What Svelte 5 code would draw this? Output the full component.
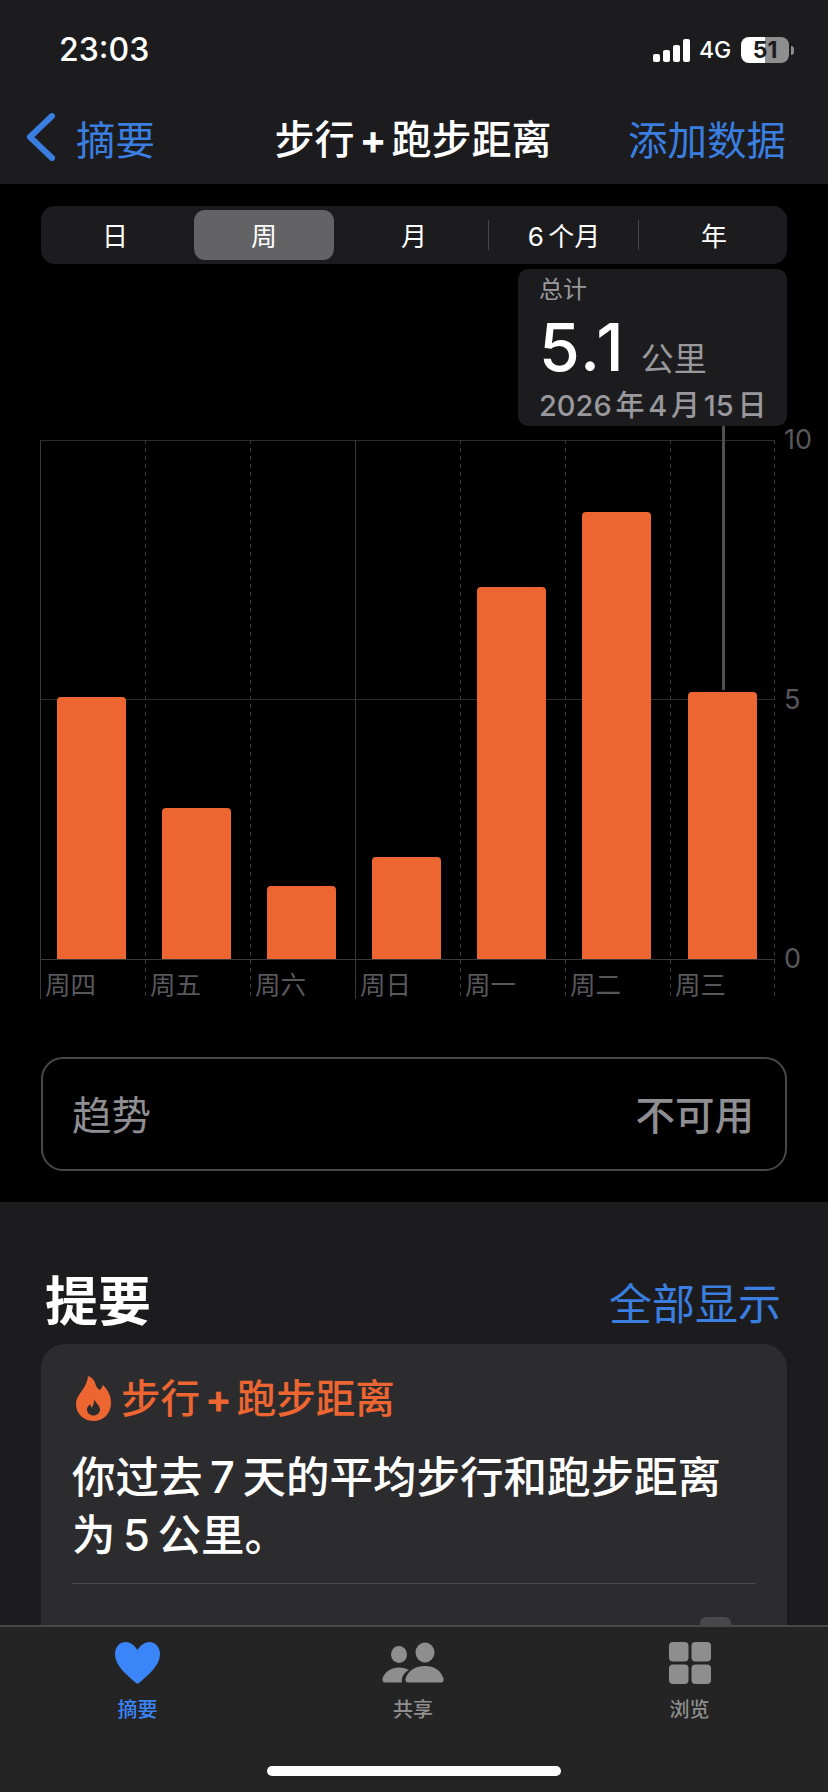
<script>
  const segments = ['日', '周', '月', '6 个月', '年'];
  const days = [
    { label: '周四', h: 262 },
    { label: '周五', h: 151 },
    { label: '周六', h: 73 },
    { label: '周日', h: 102, solid: true },
    { label: '周一', h: 372 },
    { label: '周二', h: 447 },
    { label: '周三', h: 267 }
  ];
</script>

<div class="page">
  <header class="top">
    <div class="status">
      <span class="time">23:03</span>
      <div class="status-right">
        <svg class="signal" viewBox="0 0 37 23" width="37" height="23" fill="#fff">
          <rect x="0" y="15" width="7" height="8" rx="2"/>
          <rect x="10" y="11" width="7" height="12" rx="2"/>
          <rect x="20" y="6" width="7" height="17" rx="2"/>
          <rect x="30" y="0" width="7" height="23" rx="2"/>
        </svg>
        <span class="net">4G</span>
        <div class="battery"><span>51</span></div>
        <i class="nub"></i>
      </div>
    </div>
    <nav class="nav">
      <div class="back">
        <svg viewBox="0 0 30 48" width="30" height="48" fill="none" stroke="#3a7ee0" stroke-width="6" stroke-linecap="round" stroke-linejoin="round">
          <path d="M26 3 L4 24 L26 45"/>
        </svg>
        <span>摘要</span>
      </div>
      <div class="title">步行<b>+</b>跑步距离</div>
      <div class="add">添加数据</div>
    </nav>
  </header>

  <main class="black">
    <div class="seg">
      {#each segments as s, i}
        <div class="seg-item" class:sel={i === 1} class:div={i === 2 || i === 3}><span>{s}</span></div>
      {/each}
    </div>

    <div class="chart">
      <div class="tip">
        <div class="tip-head">总计</div>
        <div class="tip-val"><strong>5.1</strong><span>公里</span></div>
        <div class="tip-date">2026 年 4 月 15 日</div>
        <i class="tip-line"></i>
      </div>
      <div class="plot">
        {#each days as d}
          <div class="col" class:solid={d.solid}>
            <div class="bar-wrap"><div class="bar" style="height:{d.h}px"></div></div>
            <div class="day">{d.label}</div>
          </div>
        {/each}
      </div>
      <div class="axis"><span>10</span><span>5</span><span>0</span></div>
    </div>

    <div class="trend">
      <span class="trend-l">趋势</span>
      <span class="trend-r">不可用</span>
    </div>
  </main>

  <section class="lower">
    <div class="lower-head">
      <h2>提要</h2>
      <span>全部显示</span>
    </div>
    <article class="card">
      <div class="card-title">
        <svg viewBox="0 0 35 45" width="35" height="45" fill="#ed6531" fill-rule="evenodd">
          <path d="M12 0 C22 4 17 10 24 14 C26 12 26 10 27 9 C33 15 35 21 35 27 C35 38 27 45 17.5 45 C8 45 0 38 0 28 C0 18 11 13 12 0 Z M18.5 23 C19 27 24 29 24 33.5 C24 37 21 39.5 17.5 39.5 C14 39.5 11 37 11 33.5 C11 31 12.5 29.5 14.5 28.5 C14.5 30 15 31.5 16 31.5 C17.5 29 18 26 18.5 23 Z"/>
        </svg>
        <span>步行<b>+</b>跑步距离</span>
      </div>
      <p class="card-text">你过去 7 天的平均步行和跑步距离<br/>为 5 公里。</p>
      <div class="rule"></div>
      <div class="peek"></div>
    </article>
  </section>

  <footer class="tabs">
    <div class="tab active">
      <svg viewBox="0 0 45 42" width="45" height="42" fill="#3a85f8">
        <path d="M22.5 8 C19.5 3 15 0 10.5 0 C4.5 0 0 5 0 12 C0 24 12 33 21 41 C22 42 23 42 24 41 C33 33 45 24 45 12 C45 5 40.5 0 34.5 0 C30 0 25.5 3 22.5 8 Z"/>
      </svg>
      <span>摘要</span>
    </div>
    <div class="tab">
      <svg viewBox="0 0 62 41" width="62" height="42" fill="#8e8e8e">
        <ellipse cx="17" cy="12" rx="8" ry="8.5"/>
        <ellipse cx="43" cy="10" rx="9.5" ry="10"/>
        <path d="M3 40 C1 40 0 38 0.5 36 C3 29 9 25 17 25 C21 25 24 26 27 27.5 C22 30 19 35 20 40 Z"/>
        <path d="M26 40 C24 40 23 38 23.5 36 C26 28 34 23.5 43 23.5 C52 23.5 59 28 61.5 36 C62 38 61 40 59 40 Z"/>
      </svg>
      <span>共享</span>
    </div>
    <div class="tab">
      <svg viewBox="0 0 42 42" width="42" height="42" fill="#8e8e8e">
        <rect x="0" y="0" width="19.5" height="19.5" rx="4"/>
        <rect x="22.5" y="0" width="19.5" height="19.5" rx="4"/>
        <rect x="0" y="22.5" width="19.5" height="19.5" rx="4"/>
        <rect x="22.5" y="22.5" width="19.5" height="19.5" rx="4"/>
      </svg>
      <span>浏览</span>
    </div>
    <div class="home"></div>
  </footer>
</div>

<style>
  :global(body) { margin: 0; background: #000; }
  .page {
    position: relative;
    width: 828px;
    height: 1792px;
    overflow: hidden;
    background: #000;
    color: #fff;
    font-family: "Inter", "Noto Sans CJK SC", sans-serif;
  }

  .top { height: 184px; background: #1c1c1e; }
  .status {
    height: 90px;
    padding: 10px 34px 0 59px;
    box-sizing: border-box;
    display: flex;
    align-items: center;
    justify-content: space-between;
  }
  .time { font-size: 32px; font-weight: 500; line-height: 80px; }
  .status-right { display: flex; align-items: center; }
  .signal { margin-right: 9px; }
  .net { font-size: 23px; font-weight: 500; margin-right: 11px; width: 31px; }
  .battery {
    width: 48px;
    height: 26px;
    border-radius: 8px;
    background: linear-gradient(90deg, #fff 50%, #8e8e8e 50%);
    display: flex;
    align-items: center;
    justify-content: center;
    color: #1c1c1e;
    font-size: 23px;
    font-weight: 700;
  }
  .nub { width: 3px; height: 9px; margin-left: 2px; background: #8e8e8e; border-radius: 0 3px 3px 0; }

  .nav {
    height: 94px;
    display: grid;
    grid-template-columns: 1fr auto 1fr;
    align-items: center;
    padding: 0 42px 4px 26px;
  }
  .back { display: flex; align-items: center; gap: 20px; color: #3a7ee0; font-size: 39.5px; }
  .title { font-size: 40px; font-weight: 500; white-space: nowrap; margin-right: -14px; }
  .title b, .card-title b { font-weight: 700; margin: 0 5px; }
  .add { text-align: right; color: #3a7ee0; font-size: 39.5px; }

  .black { height: 1018px; padding-top: 22px; box-sizing: border-box; }
  .seg {
    margin: 0 41px;
    height: 58px;
    background: #1c1c1e;
    border-radius: 14px;
    display: grid;
    grid-template-columns: 148px repeat(4, 150px);
    font-size: 26px;
    box-sizing: border-box;
  }
  .seg-item { position: relative; display: flex; align-items: center; justify-content: center; padding-bottom: 2px; }
  .seg-item span { word-spacing: -3px; }
  .seg-item.sel { margin: 4px 5px; background: #636366; border-radius: 11px; }
  .seg-item.div::after {
    content: "";
    position: absolute;
    right: 0;
    top: 14px;
    bottom: 14px;
    width: 1px;
    background: #48484a;
  }

  .chart { position: relative; display: flex; margin: 176px 0 0 40px; }
  .plot {
    display: flex;
    width: 735px;
    height: 559px;
    background:
      linear-gradient(#2c2c2e, #2c2c2e) 0 0 / 100% 1px no-repeat,
      linear-gradient(#2c2c2e, #2c2c2e) 0 259px / 100% 1px no-repeat,
      linear-gradient(#3a3a3c, #3a3a3c) 0 519px / 100% 1px no-repeat;
  }
  .col {
    width: 105px;
    box-sizing: border-box;
    background: repeating-linear-gradient(#3a3a3c 0 4px, transparent 4px 8px) 0 0 / 1px 100% no-repeat;
  }
  .col:last-child {
    background:
      repeating-linear-gradient(#3a3a3c 0 4px, transparent 4px 8px) 0 0 / 1px 100% no-repeat,
      repeating-linear-gradient(#3a3a3c 0 4px, transparent 4px 8px) 100% 0 / 1px 100% no-repeat;
  }
  .col:last-child .bar-wrap { padding-left: 18px; }
  .col:first-child, .col.solid { background: linear-gradient(#3a3a3c, #3a3a3c) 0 0 / 1px 100% no-repeat; }
  .bar-wrap { height: 519px; display: flex; align-items: flex-end; padding-left: 17px; }
  .bar { width: 69px; background: #ed6531; border-radius: 4px 4px 0 0; }
  .day { height: 40px; padding-left: 5px; color: #58585c; font-size: 25.5px; line-height: 52px; }
  .axis {
    display: flex;
    flex-direction: column;
    justify-content: space-between;
    height: 547px;
    margin-top: -14px;
    padding-left: 9px;
    color: #58585c;
    font-size: 27px;
    line-height: 28px;
  }

  .tip {
    position: absolute;
    left: 478px;
    top: -171px;
    width: 269px;
    height: 157px;
    box-sizing: border-box;
    padding: 4px 21px 0;
    background: #1c1c1e;
    border-radius: 10px;
  }
  .tip-head { color: #98989d; font-size: 24px; line-height: 34px; }
  .tip-val { display: flex; align-items: baseline; gap: 15px; height: 72px; line-height: 72px; margin-top: 4px; }
  .tip-val strong { font-size: 66px; font-weight: 500; letter-spacing: 2px; }
  .tip-val span { font-size: 33px; color: #98989d; }
  .tip-date { color: #98989d; font-size: 29px; font-weight: 500; line-height: 40px; margin-top: 3px; white-space: nowrap; word-spacing: -4px; }
  .tip-line {
    position: absolute;
    left: 204px;
    top: 157px;
    width: 3px;
    height: 264px;
    background: #505052;
  }

  .trend {
    margin: 58px 41px 0;
    height: 114px;
    box-sizing: border-box;
    border: 2px solid #48484a;
    border-radius: 22px;
    display: flex;
    align-items: center;
    justify-content: space-between;
    padding: 0 31px 4px 29px;
    font-size: 39.5px;
    color: #8e8e93;
  }
  .trend-r { font-weight: 500; }

  .lower { height: 590px; background: #1c1c1e; }
  .lower-head {
    height: 142px;
    display: flex;
    justify-content: space-between;
    align-items: center;
    padding: 50px 47px 0 45px;
    box-sizing: border-box;
  }
  h2 { margin: 0; font-size: 53px; font-weight: 700; }
  .lower-head span { color: #3a7ee0; font-size: 43px; padding-top: 6px; }
  .card {
    position: relative;
    margin: 0 41px;
    height: 400px;
    padding: 31px 31px 0;
    box-sizing: border-box;
    background: #2c2c2e;
    border-radius: 24px 24px 0 0;
  }
  .card-title { display: flex; align-items: center; gap: 10px; margin-left: 4px; color: #ed6531; font-size: 39.5px; font-weight: 500; line-height: 45px; white-space: nowrap; }
  .card-title span { padding-top: 2px; }
  .card-text { margin: 26px 0 0; font-size: 43.5px; font-weight: 500; line-height: 58px; white-space: nowrap; word-spacing: -4px; }
  .rule { height: 1px; margin-top: 19px; background: #48484a; }
  .peek { position: absolute; left: 659px; top: 273px; width: 31px; height: 20px; background: #48484a; border-radius: 6px 6px 0 0; }

  .tabs {
    position: absolute;
    left: 0;
    right: 0;
    bottom: 0;
    height: 167px;
    box-sizing: border-box;
    border-top: 2px solid #48484a;
    background: #252425;
    display: grid;
    grid-template-columns: 275px 276px 277px;
  }
  .tab { display: flex; flex-direction: column; align-items: center; padding-top: 15px; color: #8e8e8e; }
  .tab span { font-size: 20px; font-weight: 500; line-height: 28px; margin-top: 12px; }
  .tab.active { color: #3a85f8; }
  .home {
    position: absolute;
    left: 267px;
    top: 139px;
    width: 294px;
    height: 10px;
    border-radius: 5px;
    background: #fff;
  }
</style>
